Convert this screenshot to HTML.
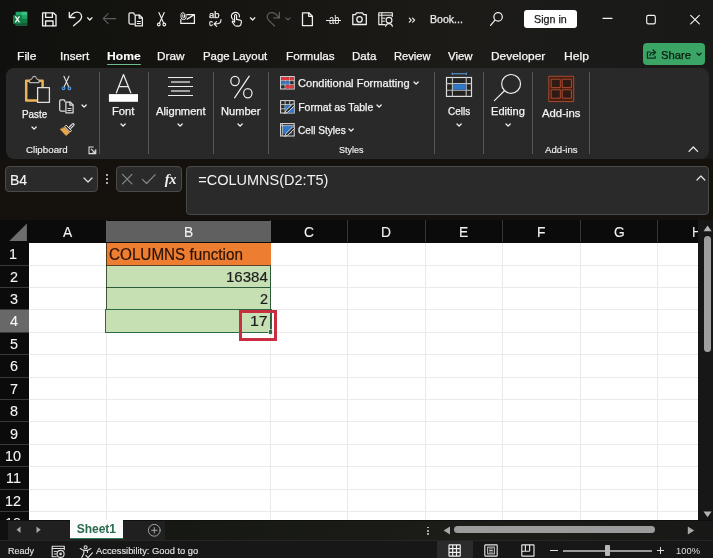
<!DOCTYPE html>
<html lang="en"><head><meta charset="utf-8"><title>Book1 - Excel</title>
<style>
html,body{margin:0;padding:0;background:#11110f;}
body{width:713px;height:558px;overflow:hidden;position:relative;font-family:"Liberation Sans",Arial,sans-serif;}
#app{position:absolute;left:0;top:0;width:713px;height:558px;overflow:hidden;will-change:transform;}
#app div,#app svg{position:absolute;}
#app svg{overflow:visible;}
.t{white-space:nowrap;transform-origin:0 0;}
</style></head><body><div id="app">
<div style="left:0px;top:0px;width:713px;height:558px;background:#11110f;"></div>
<div style="left:0px;top:0px;width:713px;height:162px;background:linear-gradient(to right,#10110e 0%,#141310 21%,#181714 43%,#1c1b18 66%,#1a1a18 86%,#191918 100%);"></div>
<div style="left:0px;top:159px;width:713px;height:62px;background:#15120e;"></div>
<div style="left:5.6px;top:67.6px;width:703.4px;height:91.4px;background:#292929;border-radius:8px;"></div>
<svg style="left:12px;top:11px;" width="17" height="17" viewBox="0 0 17 17">
<path d="M4.6 0.8 H14.2 Q15.2 0.8 15.2 1.8 V14 Q15.2 15 14.2 15 H4.6 Q3.6 15 3.6 14 V1.8 Q3.6 0.8 4.6 0.8 Z" fill="#21a366"/>
<rect x="9.4" y="0.8" width="5.8" height="3.6" fill="#33c481"/>
<rect x="3.6" y="4.4" width="5.8" height="3.5" fill="#107c41"/>
<rect x="9.4" y="4.4" width="5.8" height="3.5" fill="#21a366"/>
<rect x="3.6" y="7.9" width="5.8" height="3.5" fill="#185c37"/>
<rect x="9.4" y="7.9" width="5.8" height="3.5" fill="#107c41"/>
<path d="M3.6 11.4 H15.2 V14 Q15.2 15 14.2 15 H4.6 Q3.6 15 3.6 14 Z" fill="#185c37"/>
<rect x="1" y="3.9" width="8.8" height="9" rx="0.9" fill="#107c41"/>
<path d="M3.3 5.4 L7.5 11.4 M7.5 5.4 L3.3 11.4" stroke="#eaf7ef" stroke-width="1.35" fill="none"/>
</svg>
<div class="t" style="left:208.82px;top:10.40px;font-size:8.5px;line-height:10px;color:#f0f0f0;transform:scaleX(1.1079);-webkit-text-stroke:0.25px #f0f0f0;">ab</div>
<div class="t" style="left:208.89px;top:16.60px;font-size:9.5px;line-height:11px;color:#f0f0f0;transform:scaleX(0.8227);-webkit-text-stroke:0.25px #f0f0f0;">c</div>
<div class="t" style="left:328.63px;top:12.60px;font-size:12px;line-height:14px;color:#f0f0f0;transform:scaleX(0.7767);">ab</div>
<div style="left:326.3px;top:19.9px;width:14.8px;height:1.1px;background:#f0f0f0;"></div>
<div class="t" style="left:429.95px;top:13.00px;font-size:10.5px;line-height:12px;color:#ececec;transform:scaleX(1.0075);-webkit-text-stroke:0.25px #ececec;">Book...</div>
<div style="left:524.3px;top:9.9px;width:52.5px;height:18.4px;background:#ffffff;border-radius:3px;"></div>
<div class="t" style="left:534.32px;top:13.40px;font-size:10.5px;line-height:12px;color:#1a1a1a;transform:scaleX(1.0219);-webkit-text-stroke:0.25px #1a1a1a;">Sign in</div>
<div class="t" style="left:16.93px;top:49.50px;font-size:11px;line-height:12px;color:#f6f6f6;transform:scaleX(1.1019);-webkit-text-stroke:0.25px #f6f6f6;">File</div>
<div class="t" style="left:59.65px;top:49.50px;font-size:11px;line-height:12px;color:#f6f6f6;transform:scaleX(1.0584);-webkit-text-stroke:0.25px #f6f6f6;">Insert</div>
<div class="t" style="left:107.41px;top:49.50px;font-size:11px;line-height:12px;color:#ffffff;transform:scaleX(1.1011);font-weight:700;-webkit-text-stroke:0.1px #ffffff;">Home</div>
<div style="left:107.4px;top:63.5px;width:34px;height:1.3px;background:#6cbc8f;border-radius:1px;"></div>
<div class="t" style="left:157.26px;top:49.50px;font-size:11px;line-height:12px;color:#f6f6f6;transform:scaleX(1.0683);-webkit-text-stroke:0.25px #f6f6f6;">Draw</div>
<div class="t" style="left:202.59px;top:49.50px;font-size:11px;line-height:12px;color:#f6f6f6;transform:scaleX(1.0390);-webkit-text-stroke:0.25px #f6f6f6;">Page Layout</div>
<div class="t" style="left:285.66px;top:49.50px;font-size:11px;line-height:12px;color:#f6f6f6;transform:scaleX(1.0627);-webkit-text-stroke:0.25px #f6f6f6;">Formulas</div>
<div class="t" style="left:351.88px;top:49.50px;font-size:11px;line-height:12px;color:#f6f6f6;transform:scaleX(1.0479);-webkit-text-stroke:0.25px #f6f6f6;">Data</div>
<div class="t" style="left:393.61px;top:49.50px;font-size:11px;line-height:12px;color:#f6f6f6;transform:scaleX(1.0142);-webkit-text-stroke:0.25px #f6f6f6;">Review</div>
<div class="t" style="left:448.34px;top:49.50px;font-size:11px;line-height:12px;color:#f6f6f6;transform:scaleX(1.0384);-webkit-text-stroke:0.25px #f6f6f6;">View</div>
<div class="t" style="left:490.85px;top:49.50px;font-size:11px;line-height:12px;color:#f6f6f6;transform:scaleX(1.0823);-webkit-text-stroke:0.25px #f6f6f6;">Developer</div>
<div class="t" style="left:563.63px;top:49.50px;font-size:11px;line-height:12px;color:#f6f6f6;transform:scaleX(1.0994);-webkit-text-stroke:0.25px #f6f6f6;">Help</div>
<div style="left:642.7px;top:43.2px;width:62.8px;height:21.6px;background:#3aa564;border-radius:4px;"></div>
<div class="t" style="left:661.29px;top:48.80px;font-size:11px;line-height:12px;color:#0c1a12;transform:scaleX(1.0238);-webkit-text-stroke:0.25px #0c1a12;">Share</div>
<svg style="left:0;top:0;" width="713" height="558" viewBox="0 0 713 558"><g fill="none" stroke="#f0f0f0" stroke-width="1.35" stroke-linecap="round" stroke-linejoin="round" ><path d="M42.6 12.9 H53.6 L56 15.3 V25.9 H42.6 Z"/><path d="M45.6 13 V17.4 H52.4 V13"/><path d="M45.6 25.8 V21 H53 V25.8"/></g><g fill="none" stroke="#f0f0f0" stroke-width="1.3" stroke-linecap="round" stroke-linejoin="round" ><path d="M69.3 12.3 V17.5 H74.8"/><path d="M69.7 17.1 L72.7 13.8 Q74.6 12.2 77 12.2 C79.6 12.2 81.6 14.2 81.6 16.8 C81.6 18.4 80.9 19.4 79.8 20.4 L73.6 25.8"/></g><g fill="none" stroke="#f0f0f0" stroke-width="1.25" stroke-linecap="round" stroke-linejoin="round" ><path d="M87.6 17.8 L89.8 20 L92 17.8"/></g><g fill="none" stroke="#5c5c5c" stroke-width="1.2" stroke-linecap="round" stroke-linejoin="round" ><path d="M103.2 18.6 H115.8 M108.2 13.6 L103.2 18.6 L108.2 23.6"/></g><g fill="none" stroke="#f0f0f0" stroke-width="1.25" stroke-linecap="round" stroke-linejoin="round" ><path d="M134 24 H130.2 Q129 24 129 22.8 V14 Q129 12.8 130.2 12.8 H133 Q134.2 12.8 134.2 14 V14.6"/><path d="M135.2 15 H139.4 L142.4 18 V25.9 H135.2 Z" fill="#11110f"/><path d="M139.2 15.2 V18.2 H142.2"/><path d="M137.2 21.5 H140.4 M137.2 23.5 H140.4" stroke-width="1.1"/></g><g fill="none" stroke="#f0f0f0" stroke-width="1.1" stroke-linecap="round" stroke-linejoin="round" ><path d="M158.9 12.6 L163.6 23 M164.2 12.6 L159.5 23"/><circle cx="158.8" cy="24.5" r="1.35"/><circle cx="164.3" cy="24.5" r="1.35"/></g><g fill="none" stroke="#f0f0f0" stroke-width="1.25" stroke-linecap="round" stroke-linejoin="round" ><path d="M187 14.5 H194.4 V23.4 H180.8 V19.6"/><path d="M187.2 19.1 L194.2 14.6"/><path d="M186 14.6 V17.6 Q186 19.6 183.6 19.6 Q181 19.6 181 17.2 V14.6 Q181 12.7 182.9 12.7 Q184.5 12.7 184.5 14.6 V17 Q184.5 17.9 183.6 17.9 Q182.8 17.9 182.8 17 V14.8" stroke-width="1"/></g><g fill="none" stroke="#f0f0f0" stroke-width="1.1" stroke-linecap="round" stroke-linejoin="round" ><path d="M221 19.5 C221.2 22.8 219.6 24 214.4 24 M216.5 21.7 L214.1 24 L216.7 26.4"/></g><g fill="none" stroke="#f0f0f0" stroke-width="1.15" stroke-linecap="round" stroke-linejoin="round" ><path d="M233.2 19.6 C230.4 17.6 230.8 13.6 234.2 12.6 C237.4 11.8 240 14 239.4 17"/><path d="M234.6 22.2 V15.6 Q234.6 14.5 235.6 14.5 Q236.6 14.5 236.6 15.6 V19.4 L240.2 20.1 Q241.5 20.4 241.4 21.8 L241 24.2 Q240.7 26.1 238.8 26.1 H236.6 Q235.2 26.1 234.4 25 L232.4 22.2 Q232 21.4 232.8 21.1 Q233.6 20.9 234.6 22.2"/></g><g fill="none" stroke="#f0f0f0" stroke-width="1.25" stroke-linecap="round" stroke-linejoin="round" ><path d="M250.4 17.8 L252.6 20 L254.8 17.8"/></g><g fill="none" stroke="#5c5c5c" stroke-width="1.25" stroke-linecap="round" stroke-linejoin="round" ><path d="M279.4 12.3 V17.9 H273.8"/><path d="M279 17.5 L275.6 13.9 Q273.8 12.6 271.6 12.6 C269 12.6 267.2 14.6 267.2 17 C267.2 18.4 267.8 19.4 268.8 20.4 L274.6 26"/></g><g fill="none" stroke="#5c5c5c" stroke-width="1.2" stroke-linecap="round" stroke-linejoin="round" ><path d="M285.9 17.8 L288 19.9 L290.1 17.8"/></g><g fill="none" stroke="#f0f0f0" stroke-width="1.3" stroke-linecap="round" stroke-linejoin="round" ><path d="M302.5 12.8 H308.8 L312.4 16.2 V25.7 H302.5 Z"/><path d="M308.7 13 V16.3 H312.2"/></g><g fill="none" stroke="#f0f0f0" stroke-width="1.3" stroke-linecap="round" stroke-linejoin="round" ><path d="M352.8 14.6 H355.4 L356.6 12.9 H362.4 L363.6 14.6 H366.3 V24.5 H352.8 Z"/><circle cx="359.5" cy="19.4" r="2.7"/></g><g fill="none" stroke="#f0f0f0" stroke-width="1.15" stroke-linecap="round" stroke-linejoin="round" ><path d="M385 24.6 H378.8 V12.7 H392.3 V16.4"/><path d="M379 15.2 H392.1 M381.8 12.9 V24.4 M382.4 18.2 H385 M382.4 21.2 H384.4" stroke-width="1"/><circle cx="389" cy="20.2" r="2.9"/><path d="M385.6 26.3 Q386.2 23.6 389 23.6 Q391.8 23.6 392.4 26.3"/></g><g fill="none" stroke="#f0f0f0" stroke-width="1.15" stroke-linecap="round" stroke-linejoin="round" ><path d="M409.3 18.2 L411.3 20.2 L409.3 22.2 M412.6 18.2 L414.6 20.2 L412.6 22.2"/></g><g fill="none" stroke="#f0f0f0" stroke-width="1.25" stroke-linecap="round" stroke-linejoin="round" ><circle cx="498.1" cy="16.9" r="4.2"/><path d="M495 20.2 L490.6 25.3"/></g><g fill="none" stroke="#f4f4f4" stroke-width="1.1" stroke-linecap="round" stroke-linejoin="round" ><path d="M603 18.4 H612"/></g><g fill="none" stroke="#f4f4f4" stroke-width="1.15" stroke-linecap="round" stroke-linejoin="round" ><rect x="646.7" y="15.3" width="8.6" height="8.6" rx="1.6"/></g><g fill="none" stroke="#f4f4f4" stroke-width="1.15" stroke-linecap="round" stroke-linejoin="round" ><path d="M690.7 15.3 L699.3 23.9 M699.3 15.3 L690.7 23.9"/></g><g fill="none" stroke="#10301c" stroke-width="1.2" stroke-linecap="round" stroke-linejoin="round" ><path d="M650.2 52 H647.4 V58.2 H655.2 V56.4"/><path d="M649.9 55.6 C650.1 53.3 651.7 52.3 654 52.3 M652.9 49.8 L655.7 52.4 L652.9 55"/></g><g fill="none" stroke="#10301c" stroke-width="1.4" stroke-linecap="round" stroke-linejoin="round" ><path d="M697 53.2 L699 55.2 L701 53.2"/></g></svg>
<div style="left:98.5px;top:72.3px;width:1px;height:81.4px;background:#555555;"></div>
<div style="left:148.4px;top:72.3px;width:1px;height:81.4px;background:#555555;"></div>
<div style="left:212.9px;top:72.3px;width:1px;height:81.4px;background:#555555;"></div>
<div style="left:268.1px;top:72.3px;width:1px;height:81.4px;background:#555555;"></div>
<div style="left:434.0px;top:72.3px;width:1px;height:81.4px;background:#555555;"></div>
<div style="left:483.4px;top:72.3px;width:1px;height:81.4px;background:#555555;"></div>
<div style="left:532.3px;top:72.3px;width:1px;height:81.4px;background:#555555;"></div>
<div style="left:588.8px;top:72.3px;width:1px;height:81.4px;background:#555555;"></div>
<div class="t" style="left:22.21px;top:107.90px;font-size:10.5px;line-height:12px;color:#f4f4f4;transform:scaleX(0.9406);-webkit-text-stroke:0.25px #f4f4f4;">Paste</div>
<svg style="left:31.4px;top:125.8px;" width="6.2" height="4.2" viewBox="0 0 6.2 4.2"><path d="M1 1 L3.1 3.2 L5.2 1" fill="none" stroke="#f4f4f4" stroke-width="1.25" stroke-linecap="round" stroke-linejoin="round"/></svg>
<svg style="left:80.5px;top:104.2px;" width="6.2" height="4.2" viewBox="0 0 6.2 4.2"><path d="M1 1 L3.1 3.2 L5.2 1" fill="none" stroke="#f4f4f4" stroke-width="1.25" stroke-linecap="round" stroke-linejoin="round"/></svg>
<div class="t" style="left:25.71px;top:144.20px;font-size:9.5px;line-height:11px;color:#f0f0f0;transform:scaleX(1.0261);-webkit-text-stroke:0.15px #f0f0f0;">Clipboard</div>
<svg style="left:87.5px;top:146px;" width="9" height="9" viewBox="0 0 9 9"><g fill="none" stroke="#dcdcdc" stroke-width="1.05" stroke-linecap="square"><path d="M5.2 1 H1 V7.6 H7.8 V3.8"/><path d="M3.4 3.2 L7 6.8 M7.2 4.4 V7 H4.6"/></g></svg>
<svg style="left:108px;top:73px;" width="31" height="30" viewBox="0 0 31 30">
<path d="M8.4 19.8 L15.5 1.6 L22.8 19.8 M10.9 13.6 H20.3" fill="none" stroke="#ececec" stroke-width="1.25" stroke-linejoin="round" stroke-linecap="round"/>
<rect x="0.9" y="21.1" width="29.1" height="7.7" fill="#ffffff"/>
</svg>
<div class="t" style="left:112.20px;top:104.70px;font-size:10.5px;line-height:12px;color:#f4f4f4;transform:scaleX(1.0693);-webkit-text-stroke:0.25px #f4f4f4;">Font</div>
<svg style="left:120.2px;top:122.9px;" width="6.2" height="4.2" viewBox="0 0 6.2 4.2"><path d="M1 1 L3.1 3.2 L5.2 1" fill="none" stroke="#f4f4f4" stroke-width="1.25" stroke-linecap="round" stroke-linejoin="round"/></svg>
<div style="left:167.8px;top:76.8px;width:25.4px;height:1.2px;background:#ececec;"></div>
<div style="left:171.2px;top:81.15px;width:18.6px;height:1.5px;background:#a0a0a0;"></div>
<div style="left:167.8px;top:85.8px;width:25.4px;height:1.2px;background:#ececec;"></div>
<div style="left:171.2px;top:90.25px;width:18.6px;height:1.5px;background:#a0a0a0;"></div>
<div style="left:167.8px;top:94.9px;width:25.4px;height:1.2px;background:#ececec;"></div>
<div class="t" style="left:155.70px;top:104.70px;font-size:10.5px;line-height:12px;color:#f4f4f4;transform:scaleX(1.0639);-webkit-text-stroke:0.25px #f4f4f4;">Alignment</div>
<svg style="left:176.9px;top:122.9px;" width="6.2" height="4.2" viewBox="0 0 6.2 4.2"><path d="M1 1 L3.1 3.2 L5.2 1" fill="none" stroke="#f4f4f4" stroke-width="1.25" stroke-linecap="round" stroke-linejoin="round"/></svg>
<svg style="left:228px;top:74px;" width="27" height="26" viewBox="0 0 27 26">
<g fill="none" stroke="#ececec" stroke-width="1.25" stroke-linecap="round">
<ellipse cx="7.0" cy="7" rx="4.2" ry="4.7"/><ellipse cx="19.8" cy="19.2" rx="4.2" ry="4.7"/>
<path d="M21.2 2.2 L6.6 23.8"/></g></svg>
<div class="t" style="left:221.31px;top:104.70px;font-size:10.5px;line-height:12px;color:#f4f4f4;transform:scaleX(1.0570);-webkit-text-stroke:0.25px #f4f4f4;">Number</div>
<svg style="left:237.4px;top:122.9px;" width="6.2" height="4.2" viewBox="0 0 6.2 4.2"><path d="M1 1 L3.1 3.2 L5.2 1" fill="none" stroke="#f4f4f4" stroke-width="1.25" stroke-linecap="round" stroke-linejoin="round"/></svg>
<svg style="left:279.6px;top:75.6px;" width="16" height="15" viewBox="0 0 16 15"><rect x="0.6" y="0.6" width="13.6" height="12.4" fill="#2b2b2b" stroke="#e0e0e0" stroke-width="1"/>
<path d="M0.6 4.6 H14.2 M0.6 8.8 H14.2 M5.1 0.6 V13 M9.7 0.6 V13" stroke="#cfcfcf" stroke-width="0.9" fill="none"/>
<rect x="1.2" y="1.2" width="8" height="3" fill="#e0393e"/><rect x="5.6" y="5.2" width="3.7" height="3.1" fill="#3a78c9"/>
<rect x="1.2" y="5.2" width="3.5" height="3.1" fill="#3a78c9"/><rect x="5.6" y="9.4" width="8" height="3" fill="#e0393e"/><rect x="10.2" y="1.2" width="3.4" height="3" fill="#e0393e"/></svg>
<svg style="left:279.6px;top:99.8px;" width="16" height="15" viewBox="0 0 16 15"><rect x="0.6" y="0.6" width="13.6" height="12.4" fill="#2b2b2b" stroke="#e0e0e0" stroke-width="1"/>
<path d="M0.6 4.6 H14.2 M0.6 8.8 H14.2 M5.1 0.6 V13 M9.7 0.6 V13" stroke="#cfcfcf" stroke-width="0.9" fill="none"/>
<rect x="5.6" y="5.1" width="8.2" height="7.5" fill="#2e78cc"/>
<path d="M4.6 13.4 L6 10.4 L13 3.6 L14.8 5.2 L7.8 12.2 Z" fill="#2b2b2b" stroke="#eaeaea" stroke-width="0.9" stroke-linejoin="round"/></svg>
<svg style="left:279.6px;top:123px;" width="16" height="15" viewBox="0 0 16 15"><rect x="0.6" y="0.6" width="13.6" height="12.4" fill="#2b2b2b" stroke="#e0e0e0" stroke-width="1"/>
<rect x="2.6" y="2.8" width="9.4" height="8" fill="#2e78cc"/>
<path d="M0.6 2.6 H14.2 M2.4 0.6 V13" stroke="#cfcfcf" stroke-width="0.8" fill="none"/>
<path d="M4.6 13.4 L6 10.4 L13 3.6 L14.8 5.2 L7.8 12.2 Z" fill="#2b2b2b" stroke="#eaeaea" stroke-width="0.9" stroke-linejoin="round"/></svg>
<div class="t" style="left:297.54px;top:77.30px;font-size:10.5px;line-height:12px;color:#f4f4f4;transform:scaleX(1.0572);-webkit-text-stroke:0.25px #f4f4f4;">Conditional Formatting</div>
<svg style="left:412.5px;top:80.7px;" width="6.2" height="4.2" viewBox="0 0 6.2 4.2"><path d="M1 1 L3.1 3.2 L5.2 1" fill="none" stroke="#f4f4f4" stroke-width="1.25" stroke-linecap="round" stroke-linejoin="round"/></svg>
<div class="t" style="left:298.16px;top:100.60px;font-size:10.5px;line-height:12px;color:#f4f4f4;-webkit-text-stroke:0.25px #f4f4f4;">Format as Table</div>
<svg style="left:376.3px;top:104.1px;" width="6.2" height="4.2" viewBox="0 0 6.2 4.2"><path d="M1 1 L3.1 3.2 L5.2 1" fill="none" stroke="#f4f4f4" stroke-width="1.25" stroke-linecap="round" stroke-linejoin="round"/></svg>
<div class="t" style="left:297.59px;top:124.10px;font-size:10.5px;line-height:12px;color:#f4f4f4;transform:scaleX(0.9626);-webkit-text-stroke:0.25px #f4f4f4;">Cell Styles</div>
<svg style="left:348.3px;top:127.7px;" width="6.2" height="4.2" viewBox="0 0 6.2 4.2"><path d="M1 1 L3.1 3.2 L5.2 1" fill="none" stroke="#f4f4f4" stroke-width="1.25" stroke-linecap="round" stroke-linejoin="round"/></svg>
<div class="t" style="left:339.10px;top:144.20px;font-size:9.5px;line-height:11px;color:#f0f0f0;transform:scaleX(0.9432);-webkit-text-stroke:0.15px #f0f0f0;">Styles</div>
<svg style="left:445px;top:72px;" width="29" height="27" viewBox="0 0 29 27">
<path d="M7.2 1.8 H21.4 M7.2 0.6 V3 M21.4 0.6 V3" stroke="#5aa2e6" stroke-width="1" fill="none"/>
<rect x="1.5" y="5.5" width="25" height="18.9" fill="#222222" stroke="#dedede" stroke-width="1.2"/>
<path d="M1.5 11.6 H26.5 M1.5 18.2 H26.5 M7.4 5.5 V24.4 M21.2 5.5 V24.4" stroke="#bdbdbd" stroke-width="1.1" fill="none"/>
<rect x="8" y="12.2" width="12.7" height="5.5" fill="#2e78cc"/>
</svg>
<div class="t" style="left:447.80px;top:104.70px;font-size:10.5px;line-height:12px;color:#f4f4f4;transform:scaleX(0.9479);-webkit-text-stroke:0.25px #f4f4f4;">Cells</div>
<svg style="left:455.5px;top:122.9px;" width="6.2" height="4.2" viewBox="0 0 6.2 4.2"><path d="M1 1 L3.1 3.2 L5.2 1" fill="none" stroke="#f4f4f4" stroke-width="1.25" stroke-linecap="round" stroke-linejoin="round"/></svg>
<svg style="left:493px;top:73px;" width="29" height="29" viewBox="0 0 29 29"><g fill="none" stroke="#ececec" stroke-width="1.2" stroke-linecap="round"><circle cx="18.1" cy="10.9" r="9.4"/><path d="M11.4 17.8 L1.4 27.6"/></g></svg>
<div class="t" style="left:490.81px;top:104.70px;font-size:10.5px;line-height:12px;color:#f4f4f4;transform:scaleX(1.0538);-webkit-text-stroke:0.25px #f4f4f4;">Editing</div>
<svg style="left:504.6px;top:122.9px;" width="6.2" height="4.2" viewBox="0 0 6.2 4.2"><path d="M1 1 L3.1 3.2 L5.2 1" fill="none" stroke="#f4f4f4" stroke-width="1.25" stroke-linecap="round" stroke-linejoin="round"/></svg>
<div class="t" style="left:541.90px;top:106.60px;font-size:10.5px;line-height:12px;color:#f4f4f4;transform:scaleX(1.0787);-webkit-text-stroke:0.25px #f4f4f4;">Add-ins</div>
<div class="t" style="left:544.50px;top:144.20px;font-size:9.5px;line-height:11px;color:#f0f0f0;transform:scaleX(1.0134);-webkit-text-stroke:0.15px #f0f0f0;">Add-ins</div>
<svg style="left:688.3px;top:146.4px;" width="10.6" height="6.4" viewBox="0 0 10.6 6.4"><path d="M1 5.4 L5.3 1 L9.6 5.4" fill="none" stroke="#e6e6e6" stroke-width="1.3" stroke-linecap="round" stroke-linejoin="round"/></svg>
<svg style="left:0;top:0;" width="713" height="558" viewBox="0 0 713 558"><g fill="none" stroke="#ededed" stroke-width="1.2" stroke-linecap="round" stroke-linejoin="round" ><path d="M27.4 80.8 H41.4 V100.6 H27.4 Z" fill="#222222" stroke="none"/></g><g fill="none" stroke="#ecb459" stroke-width="2.5" stroke-linecap="round" stroke-linejoin="round" stroke-linecap="butt" stroke-linejoin="miter"><path d="M30.4 80.8 H26.2 V100.6 H36.6"/><path d="M39 80.8 H42.6 V86.4"/></g><g fill="none" stroke="#b4b4b4" stroke-width="1.1" stroke-linecap="round" stroke-linejoin="round" ><path d="M29.6 82.6 V80.6 Q29.6 79.9 30.4 79.7 Q31.8 79.4 32.2 78.2 Q32.8 76.4 34.3 76.4 Q35.8 76.4 36.4 78.2 Q36.8 79.4 38.2 79.7 Q39 79.9 39 80.6 V82.6 Z" fill="#1e1e1e"/></g><g fill="none" stroke="#dedede" stroke-width="1.3" stroke-linecap="round" stroke-linejoin="round" stroke-linejoin="miter"><rect x="37.6" y="87.6" width="11.8" height="14.8" fill="#282828"/></g><g fill="none" stroke="#e6e6e6" stroke-width="1.05" stroke-linecap="round" stroke-linejoin="round" ><path d="M63.9 76.2 L68.7 86.8 M69 76.2 L64.2 86.8"/></g><g fill="none" stroke="#4a9de6" stroke-width="1.15" stroke-linecap="round" stroke-linejoin="round" ><circle cx="63.5" cy="88.3" r="1.35"/><circle cx="69.4" cy="88.3" r="1.35"/></g><g fill="none" stroke="#dcdcdc" stroke-width="1.25" stroke-linecap="round" stroke-linejoin="round" ><g transform="translate(-69.3,87.0)"><path d="M134 24 H130.2 Q129 24 129 22.8 V14 Q129 12.8 130.2 12.8 H133 Q134.2 12.8 134.2 14 V14.6"/><path d="M135.2 15 H139.4 L142.4 18 V25.9 H135.2 Z" fill="#292929"/><path d="M139.2 15.2 V18.2 H142.2"/><path d="M137.2 21.5 H140.4 M137.2 23.5 H140.4" stroke-width="1.1"/></g></g><g fill="none" stroke="#e6e6e6" stroke-width="1.1" stroke-linecap="round" stroke-linejoin="round" ><path d="M69.4 127 L72.4 123.9 Q73.2 123.2 73.9 123.9 Q74.5 124.6 73.8 125.4 L70.8 128.4"/></g><g fill="none" stroke="#e6e6e6" stroke-width="1.0" stroke-linecap="round" stroke-linejoin="round" ><path d="M66.4 125.4 L71.6 130.6 L70.2 132 L65 126.8 Z" fill="#2c2c2c"/></g><g fill="none" stroke="#ededed" stroke-width="1.2" stroke-linecap="round" stroke-linejoin="round" ><path d="M64.4 127.4 L69.6 132.6 L66 135.6 L60.4 129.4 Z" fill="#e8a94c" stroke="#e8a94c" stroke-width="0.6"/></g><g fill="none" stroke="#a64c31" stroke-width="1.0" stroke-linecap="round" stroke-linejoin="round" stroke-linejoin="miter"><rect x="549.2" y="76.3" width="24.5" height="25.3" fill="#4a1c10"/></g><g fill="none" stroke="#a64c31" stroke-width="1.0" stroke-linecap="round" stroke-linejoin="round" stroke-linejoin="miter"><rect x="551.5" y="79.2" width="8.8" height="8.4" fill="#2f1a14"/></g><g fill="none" stroke="#a64c31" stroke-width="1.0" stroke-linecap="round" stroke-linejoin="round" stroke-linejoin="miter"><rect x="562.6" y="79.2" width="8.8" height="8.4" fill="#2f1a14"/></g><g fill="none" stroke="#a64c31" stroke-width="1.0" stroke-linecap="round" stroke-linejoin="round" stroke-linejoin="miter"><rect x="551.5" y="89.8" width="8.8" height="8.4" fill="#2f1a14"/></g><g fill="none" stroke="#a64c31" stroke-width="1.0" stroke-linecap="round" stroke-linejoin="round" stroke-linejoin="miter"><rect x="562.6" y="89.8" width="8.8" height="8.4" fill="#2f1a14"/></g></svg>
<div style="left:5.4px;top:166.1px;width:92.6px;height:26.1px;background:#2a2a2a;box-sizing:border-box;border:1px solid #4a4a4a;border-radius:4px;"></div>
<div class="t" style="left:10.28px;top:170.90px;font-size:15px;line-height:17px;color:#f4f4f4;transform:scaleX(0.9309);-webkit-text-stroke:0.15px #f4f4f4;">B4</div>
<svg style="left:83.0px;top:177.4px;" width="10" height="6" viewBox="0 0 10 6"><path d="M1 1 L5.0 5 L9 1" fill="none" stroke="#e0e0e0" stroke-width="1.2" stroke-linecap="round" stroke-linejoin="round"/></svg>
<div style="left:105.9px;top:174.1px;width:2.2px;height:2.2px;background:#dedede;border-radius:1.1px;"></div>
<div style="left:105.9px;top:178.1px;width:2.2px;height:2.2px;background:#dedede;border-radius:1.1px;"></div>
<div style="left:105.9px;top:182.2px;width:2.2px;height:2.2px;background:#dedede;border-radius:1.1px;"></div>
<div style="left:115.6px;top:166.1px;width:66.6px;height:26.1px;background:#2a2a2a;box-sizing:border-box;border:1px solid #4a4a4a;border-radius:4px;"></div>
<svg style="left:121px;top:173.4px;" width="12" height="12" viewBox="0 0 12 12"><g fill="none" stroke="#8c8c8c" stroke-width="1.1" stroke-linecap="round" stroke-linejoin="round"><path d="M1.5 1.4 L10.9 10.8 M10.9 1.4 L1.5 10.8"/></g></svg>
<svg style="left:141.4px;top:173.2px;" width="16" height="12" viewBox="0 0 16 12"><g fill="none" stroke="#8c8c8c" stroke-width="1.1" stroke-linecap="round" stroke-linejoin="round"><path d="M1.4 6.4 L5.6 10.5 L14.2 1.6"/></g></svg>
<div class="t" style="left:164.8px;top:170.6px;font-family:'Liberation Serif',serif;font-style:italic;font-weight:700;font-size:14.5px;line-height:17px;color:#f0f0f0;letter-spacing:-0.3px;">fx</div>
<div style="left:186.2px;top:166.1px;width:523px;height:49.2px;background:#2a2a2a;box-sizing:border-box;border:1px solid #4a4a4a;border-radius:4px;"></div>
<div class="t" style="left:198.27px;top:171.60px;font-size:14.5px;line-height:16px;color:#f2f2f2;">=COLUMNS(D2:T5)</div>
<svg style="left:695.9px;top:174.6px;" width="9.8" height="6.0" viewBox="0 0 9.8 6.0"><path d="M1 5.0 L4.9 1 L8.8 5.0" fill="none" stroke="#e6e6e6" stroke-width="1.2" stroke-linecap="round" stroke-linejoin="round"/></svg>
<div style="left:0px;top:220.3px;width:713px;height:300.1px;background:#0b0b0b;"></div>
<div style="left:28.6px;top:242.5px;width:669.6px;height:277.9px;background:#ffffff;"></div>
<div style="left:105.9px;top:242.5px;width:1px;height:277.9px;background:#eaeaea;"></div>
<div style="left:270.1px;top:242.5px;width:1px;height:277.9px;background:#eaeaea;"></div>
<div style="left:347.2px;top:242.5px;width:1px;height:277.9px;background:#eaeaea;"></div>
<div style="left:424.9px;top:242.5px;width:1px;height:277.9px;background:#eaeaea;"></div>
<div style="left:502.4px;top:242.5px;width:1px;height:277.9px;background:#eaeaea;"></div>
<div style="left:579.8px;top:242.5px;width:1px;height:277.9px;background:#eaeaea;"></div>
<div style="left:657.3px;top:242.5px;width:1px;height:277.9px;background:#eaeaea;"></div>
<div style="left:28.6px;top:264.72px;width:669.6px;height:1px;background:#eaeaea;"></div>
<div style="left:28.6px;top:286.84px;width:669.6px;height:1px;background:#eaeaea;"></div>
<div style="left:28.6px;top:309.26px;width:669.6px;height:1px;background:#eaeaea;"></div>
<div style="left:28.6px;top:331.68px;width:669.6px;height:1px;background:#eaeaea;"></div>
<div style="left:28.6px;top:354.1px;width:669.6px;height:1px;background:#eaeaea;"></div>
<div style="left:28.6px;top:376.52px;width:669.6px;height:1px;background:#eaeaea;"></div>
<div style="left:28.6px;top:398.94px;width:669.6px;height:1px;background:#eaeaea;"></div>
<div style="left:28.6px;top:421.36px;width:669.6px;height:1px;background:#eaeaea;"></div>
<div style="left:28.6px;top:443.78px;width:669.6px;height:1px;background:#eaeaea;"></div>
<div style="left:28.6px;top:466.2px;width:669.6px;height:1px;background:#eaeaea;"></div>
<div style="left:28.6px;top:488.62px;width:669.6px;height:1px;background:#eaeaea;"></div>
<div style="left:28.6px;top:511.04px;width:669.6px;height:1px;background:#eaeaea;"></div>
<div style="left:105.9px;top:220.3px;width:1px;height:22.2px;background:#363636;"></div>
<div style="left:270.1px;top:220.3px;width:1px;height:22.2px;background:#363636;"></div>
<div style="left:347.2px;top:220.3px;width:1px;height:22.2px;background:#363636;"></div>
<div style="left:424.9px;top:220.3px;width:1px;height:22.2px;background:#363636;"></div>
<div style="left:502.4px;top:220.3px;width:1px;height:22.2px;background:#363636;"></div>
<div style="left:579.8px;top:220.3px;width:1px;height:22.2px;background:#363636;"></div>
<div style="left:657.3px;top:220.3px;width:1px;height:22.2px;background:#363636;"></div>
<div style="left:0px;top:264.72px;width:28.6px;height:1px;background:#3a3a3a;"></div>
<div style="left:0px;top:286.84px;width:28.6px;height:1px;background:#3a3a3a;"></div>
<div style="left:0px;top:309.26px;width:28.6px;height:1px;background:#3a3a3a;"></div>
<div style="left:0px;top:331.68px;width:28.6px;height:1px;background:#3a3a3a;"></div>
<div style="left:0px;top:354.1px;width:28.6px;height:1px;background:#3a3a3a;"></div>
<div style="left:0px;top:376.52px;width:28.6px;height:1px;background:#3a3a3a;"></div>
<div style="left:0px;top:398.94px;width:28.6px;height:1px;background:#3a3a3a;"></div>
<div style="left:0px;top:421.36px;width:28.6px;height:1px;background:#3a3a3a;"></div>
<div style="left:0px;top:443.78px;width:28.6px;height:1px;background:#3a3a3a;"></div>
<div style="left:0px;top:466.2px;width:28.6px;height:1px;background:#3a3a3a;"></div>
<div style="left:0px;top:488.62px;width:28.6px;height:1px;background:#3a3a3a;"></div>
<div style="left:0px;top:511.04px;width:28.6px;height:1px;background:#3a3a3a;"></div>
<div style="left:106.4px;top:220.8px;width:164.2px;height:21.7px;background:#606060;"></div>
<div style="left:0px;top:309.76px;width:28.6px;height:22.42px;background:#686868;"></div>
<svg style="left:0px;top:220px;" width="29" height="23" viewBox="0 0 29 23"><path d="M9.3 20.9 L26.9 3.6 V20.9 Z" fill="#6e6e6e"/></svg>
<div class="t" style="left:62.91px;top:223.20px;font-size:15px;line-height:17px;color:#f2f2f2;transform:scaleX(0.9200);-webkit-text-stroke:0.1px #f2f2f2;">A</div>
<div class="t" style="left:183.70px;top:223.20px;font-size:15px;line-height:17px;color:#f2f2f2;transform:scaleX(0.9200);-webkit-text-stroke:0.1px #f2f2f2;">B</div>
<div class="t" style="left:304.08px;top:223.20px;font-size:15px;line-height:17px;color:#f2f2f2;transform:scaleX(0.9200);-webkit-text-stroke:0.1px #f2f2f2;">C</div>
<div class="t" style="left:381.34px;top:223.20px;font-size:15px;line-height:17px;color:#f2f2f2;transform:scaleX(0.9200);-webkit-text-stroke:0.1px #f2f2f2;">D</div>
<div class="t" style="left:459.29px;top:223.20px;font-size:15px;line-height:17px;color:#f2f2f2;transform:scaleX(0.9200);-webkit-text-stroke:0.1px #f2f2f2;">E</div>
<div class="t" style="left:537.11px;top:223.20px;font-size:15px;line-height:17px;color:#f2f2f2;transform:scaleX(0.9200);-webkit-text-stroke:0.1px #f2f2f2;">F</div>
<div class="t" style="left:613.84px;top:223.20px;font-size:15px;line-height:17px;color:#f2f2f2;transform:scaleX(0.9200);-webkit-text-stroke:0.1px #f2f2f2;">G</div>
<div style="left:28.6px;top:220.3px;width:669.6px;height:22px;overflow:hidden;"><div class="t" style="left:662.98px;top:2.90px;font-size:15px;line-height:17px;color:#f2f2f2;transform:scaleX(0.92);">H</div></div>
<div class="t" style="left:9.38px;top:245.20px;font-size:15.5px;line-height:17px;color:#f6f6f6;transform:scaleX(0.9300);-webkit-text-stroke:0.1px #f6f6f6;">1</div>
<div class="t" style="left:9.60px;top:267.92px;font-size:15.5px;line-height:17px;color:#f6f6f6;transform:scaleX(0.9300);-webkit-text-stroke:0.1px #f6f6f6;">2</div>
<div class="t" style="left:9.60px;top:290.04px;font-size:15.5px;line-height:17px;color:#f6f6f6;transform:scaleX(0.9300);-webkit-text-stroke:0.1px #f6f6f6;">3</div>
<div class="t" style="left:9.67px;top:312.46px;font-size:15.5px;line-height:17px;color:#f6f6f6;transform:scaleX(0.9300);-webkit-text-stroke:0.1px #f6f6f6;">4</div>
<div class="t" style="left:9.60px;top:334.88px;font-size:15.5px;line-height:17px;color:#f6f6f6;transform:scaleX(0.9300);-webkit-text-stroke:0.1px #f6f6f6;">5</div>
<div class="t" style="left:9.53px;top:357.30px;font-size:15.5px;line-height:17px;color:#f6f6f6;transform:scaleX(0.9300);-webkit-text-stroke:0.1px #f6f6f6;">6</div>
<div class="t" style="left:9.60px;top:379.72px;font-size:15.5px;line-height:17px;color:#f6f6f6;transform:scaleX(0.9300);-webkit-text-stroke:0.1px #f6f6f6;">7</div>
<div class="t" style="left:9.56px;top:402.14px;font-size:15.5px;line-height:17px;color:#f6f6f6;transform:scaleX(0.9300);-webkit-text-stroke:0.1px #f6f6f6;">8</div>
<div class="t" style="left:9.60px;top:424.56px;font-size:15.5px;line-height:17px;color:#f6f6f6;transform:scaleX(0.9300);-webkit-text-stroke:0.1px #f6f6f6;">9</div>
<div class="t" style="left:5.31px;top:446.98px;font-size:15.5px;line-height:17px;color:#f6f6f6;transform:scaleX(0.9300);-webkit-text-stroke:0.1px #f6f6f6;">10</div>
<div class="t" style="left:5.92px;top:469.40px;font-size:15.5px;line-height:17px;color:#f6f6f6;transform:scaleX(0.9300);-webkit-text-stroke:0.1px #f6f6f6;">11</div>
<div class="t" style="left:5.42px;top:491.82px;font-size:15.5px;line-height:17px;color:#f6f6f6;transform:scaleX(0.9300);-webkit-text-stroke:0.1px #f6f6f6;">12</div>
<div style="left:0;top:511.54px;width:28.6px;height:8.86px;overflow:hidden;"><div class="t" style="left:5.35px;top:2.70px;font-size:15.5px;line-height:18px;color:#f6f6f6;transform:scaleX(0.93);">13</div></div>
<div style="left:106.4px;top:242.5px;width:164.2px;height:22.42px;background:#ed7d31;"></div>
<div style="left:106.4px;top:265.22px;width:164.2px;height:67.26px;background:#c6e0b4;"></div>
<div style="left:106.4px;top:264.62px;width:164.2px;height:1.1px;background:#5e4426;"></div>
<div style="left:106.4px;top:286.74px;width:164.2px;height:1.2px;background:#2d5a3a;"></div>
<div style="left:270.0px;top:265.22px;width:1.0px;height:67.26px;background:#2d5a3a;"></div>
<div style="left:105.8px;top:242.5px;width:1.1px;height:67.26px;background:rgba(20,30,10,0.72);"></div>
<div style="left:105.4px;top:308.76px;width:166.2px;height:24.42px;background:transparent;box-sizing:border-box;border:1.3px solid #2a6a45;"></div>
<div style="left:268.7px;top:330.28px;width:3.6px;height:3.6px;background:#2f6f52;box-shadow:0 0 0 0.7px #dfead8;"></div>
<div class="t" style="left:109.24px;top:245.80px;font-size:16px;line-height:17px;color:#2a1408;transform:scaleX(0.9535);-webkit-text-stroke:0.2px #2a1408;">COLUMNS function</div>
<div class="t" style="left:225.67px;top:267.90px;font-size:15.5px;line-height:17px;color:#1c1c1c;transform:scaleX(0.9696);-webkit-text-stroke:0.2px #1c1c1c;">16384</div>
<div class="t" style="left:259.72px;top:290.10px;font-size:15.5px;line-height:17px;color:#1c1c1c;transform:scaleX(0.9300);-webkit-text-stroke:0.2px #1c1c1c;">2</div>
<div class="t" style="left:250.10px;top:312.30px;font-size:15.5px;line-height:17px;color:#1c1c1c;transform:scaleX(1.0283);-webkit-text-stroke:0.2px #1c1c1c;">17</div>
<div style="left:239.4px;top:309.5px;width:38px;height:31.5px;background:transparent;box-sizing:border-box;border:3px solid #c92d40;"></div>
<div style="left:698.2px;top:220.3px;width:14.8px;height:300.1px;background:#171717;"></div>
<svg style="left:702.8px;top:225.2px;" width="10" height="7" viewBox="0 0 10 7"><path d="M0.5 6.3 L4.55 0.5 L8.6 6.3 Z" fill="#b4b4b4"/></svg>
<div style="left:704px;top:236px;width:7.1px;height:116px;background:#9e9e9e;border-radius:3.5px;"></div>
<svg style="left:702.8px;top:510.8px;" width="10" height="7" viewBox="0 0 10 7"><path d="M0.5 0.5 L4.55 6.3 L8.6 0.5 Z" fill="#b4b4b4"/></svg>
<div style="left:0px;top:520.4px;width:713px;height:19.8px;background:#101010;"></div>
<div style="left:8px;top:521.2px;width:157px;height:18.6px;background:#202020;"></div>
<div style="left:165px;top:521.2px;width:548px;height:18.6px;background:linear-gradient(to right,#161814,#1c1d19 60%,#181916);"></div>
<svg style="left:15.8px;top:526.1px;" width="6" height="8" viewBox="0 0 6 8"><path d="M4.5 0.4 V7 L0.5 3.7 Z" fill="#a6a6a6"/></svg>
<svg style="left:35.8px;top:526.1px;" width="6" height="8" viewBox="0 0 6 8"><path d="M0.5 0.4 V7 L4.7 3.7 Z" fill="#a6a6a6"/></svg>
<div style="left:70px;top:520.4px;width:53px;height:18.9px;background:#fbfbfb;"></div>
<div style="left:70px;top:537.9px;width:53px;height:1.6px;background:#2f7d55;"></div>
<div class="t" style="left:76.64px;top:522.40px;font-size:12px;line-height:14px;color:#2a6b4b;font-weight:700;">Sheet1</div>
<svg style="left:146.5px;top:523px;" width="15" height="15" viewBox="0 0 15 15"><g fill="none" stroke="#b0b0b0" stroke-width="0.9" stroke-linecap="round"><circle cx="7.3" cy="7.3" r="5.9"/><path d="M4.6 7.3 H10 M7.3 4.6 V10"/></g></svg>
<div style="left:427px;top:526.5px;width:1.8px;height:1.8px;background:#d0d0d0;border-radius:1px;"></div>
<div style="left:427px;top:529.8px;width:1.8px;height:1.8px;background:#d0d0d0;border-radius:1px;"></div>
<div style="left:427px;top:533.1px;width:1.8px;height:1.8px;background:#d0d0d0;border-radius:1px;"></div>
<svg style="left:442.6px;top:525.6px;" width="8" height="9" viewBox="0 0 8 9"><path d="M7 0.6 V8.4 L0.6 4.5 Z" fill="#a8a8a8"/></svg>
<div style="left:454.2px;top:526.1px;width:200.7px;height:7.3px;background:#9c9c9c;border-radius:3.7px;"></div>
<svg style="left:687.4px;top:525.6px;" width="8" height="9" viewBox="0 0 8 9"><path d="M0.8 0.6 V8.4 L7.2 4.5 Z" fill="#a8a8a8"/></svg>
<div style="left:0px;top:540.2px;width:713px;height:18px;background:#171717;"></div>
<div style="left:0px;top:540.2px;width:713px;height:0.8px;background:#262626;"></div>
<div class="t" style="left:8.48px;top:545.40px;font-size:9.5px;line-height:11px;color:#e4e4e4;transform:scaleX(0.9477);-webkit-text-stroke:0.12px #e4e4e4;">Ready</div>
<svg style="left:50.5px;top:544.5px;" width="15" height="14" viewBox="0 0 15 14"><g fill="none" stroke="#dcdcdc" stroke-width="1.1" stroke-linecap="round" stroke-linejoin="round">
<path d="M5.4 11.8 H1.2 V1.2 H13.3 V4.6"/><path d="M1.2 3.5 H13.3 M3.2 6.4 H5.6 M3.2 9 H5.2" stroke-width="1"/>
<circle cx="9.6" cy="8.9" r="3.5"/><circle cx="9.6" cy="8.9" r="1.3" fill="#dcdcdc" stroke="none"/></g></svg>
<svg style="left:78.5px;top:544.5px;" width="15" height="14" viewBox="0 0 15 14"><g fill="none" stroke="#dcdcdc" stroke-width="1.1" stroke-linecap="round" stroke-linejoin="round">
<circle cx="6.6" cy="2.2" r="1.5"/>
<path d="M1.2 3.6 L4.8 5.4 H8.4 L12 3.6"/><path d="M4.8 5.4 V8.4 L2.8 12.4 M8.4 5.4 V7.4"/>
<path d="M6.8 10.4 L9 12.6 L13.4 7.8"/></g></svg>
<div class="t" style="left:95.60px;top:545.40px;font-size:9.5px;line-height:11px;color:#e4e4e4;transform:scaleX(0.9822);-webkit-text-stroke:0.12px #e4e4e4;">Accessibility: Good to go</div>
<div style="left:436.8px;top:540.6px;width:36.7px;height:17.4px;background:#2b2b2b;"></div>
<svg style="left:447.6px;top:543.8px;" width="14" height="13" viewBox="0 0 14 13"><g fill="none" stroke="#f0f0f0" stroke-width="1.15"><rect x="1" y="0.9" width="11.2" height="11.2" rx="0.4"/><path d="M1 4.6 H12.2 M1 8.4 H12.2 M4.7 0.9 V12.1 M8.5 0.9 V12.1"/></g></svg>
<svg style="left:484.3px;top:543.8px;" width="14" height="13" viewBox="0 0 14 13"><g fill="none" stroke="#e4e4e4" stroke-width="1.15"><rect x="0.8" y="0.9" width="12.4" height="11.2" rx="0.5"/><rect x="3.7" y="3.1" width="6.6" height="6.8" stroke-width="0.9"/><path d="M5.2 4.9 H8.8 M5.2 6.5 H8.8 M5.2 8.1 H8.8" stroke-width="0.8"/></g></svg>
<svg style="left:520.5px;top:543.8px;" width="14" height="13" viewBox="0 0 14 13"><g fill="none" stroke="#e4e4e4" stroke-width="1.15"><rect x="0.8" y="0.9" width="12.2" height="11.2" rx="0.4"/><path d="M4.4 0.9 V7.2 M8.6 0.9 V7.2 M0.8 7.2 H8.6"/></g></svg>
<div style="left:550.1px;top:550.3px;width:7.6px;height:1.1px;background:#e0e0e0;"></div>
<div style="left:562.7px;top:550.1px;width:89.3px;height:1.5px;background:#9a9a9a;"></div>
<div style="left:605.2px;top:545px;width:5px;height:11px;background:#b8b8b8;border-radius:1px;"></div>
<div style="left:657px;top:550.35px;width:6.8px;height:0.95px;background:#dcdcdc;"></div>
<div style="left:659.93px;top:547.4px;width:0.95px;height:6.8px;background:#dcdcdc;"></div>
<div class="t" style="left:675.50px;top:545.30px;font-size:9.5px;line-height:11px;color:#dedede;transform:scaleX(0.9882);">100%</div>
</div></body></html>
